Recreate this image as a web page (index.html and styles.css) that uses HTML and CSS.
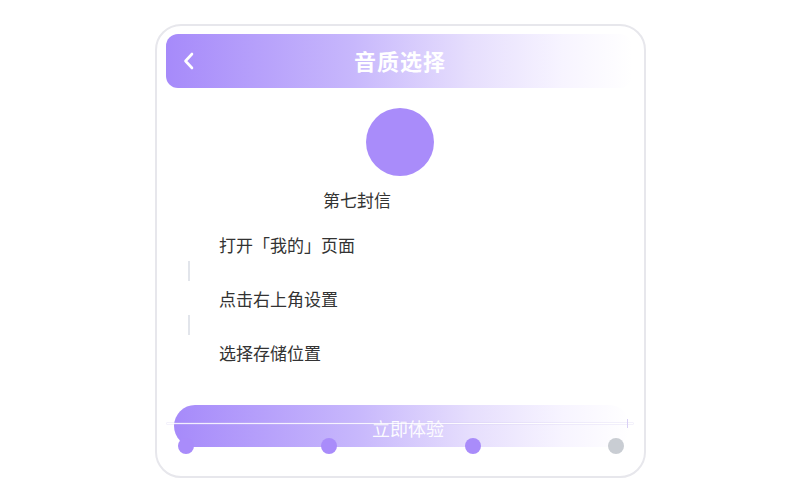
FILE: index.html
```
<!DOCTYPE html>
<html lang="zh">
<head>
<meta charset="utf-8">
<link rel="stylesheet" href="styles.css">
</head>
<body>
<div class="card">
  <div class="header">
    <svg class="back" width="14" height="18" viewBox="0 0 14 18"><path d="M10 2 L3.5 9 L10 16" fill="none" stroke="#fff" stroke-width="2.6" stroke-linecap="round" stroke-linejoin="round"/></svg>
    <div class="title">音质选择</div>
  </div>
  <div class="avatar"></div>
  <div class="name">第七封信</div>
  <div class="steps">
    <div class="step">打开「我的」页面</div>
    <div class="sep"></div>
    <div class="step">点击右上角设置</div>
    <div class="sep"></div>
    <div class="step">选择存储位置</div>
  </div>
  <div class="bottom">
    <div class="btn">立即体验</div>
    <div class="hline"><span class="tick"></span></div>
    <div class="dots">
      <span class="dot on"></span>
      <span class="dot on"></span>
      <span class="dot on"></span>
      <span class="dot off"></span>
    </div>
  </div>
</div>
</body>
</html>
```
FILE: styles.css
```
html, body {
  margin: 0;
  padding: 0;
  background: #fff;
}
body {
  font-family: "Noto Sans CJK SC", "Noto Sans", sans-serif;
  color: #333;
}
.card {
  box-sizing: border-box;
  width: 491px;
  height: 454px;
  margin: 24px 0 0 155px;
  border: 2px solid #e7e7ec;
  border-radius: 26px;
  padding: 8px 12px 0 9px;
  display: flex;
  flex-direction: column;
}
.header {
  position: relative;
  height: 54px;
  border-radius: 12px;
  background: linear-gradient(90deg, #a68afa 0%, #c7b7fc 40%, #e6defd 65%, #f7f4ff 85%, #ffffff 100%);
  display: flex;
  align-items: center;
  justify-content: center;
}
.back {
  position: absolute;
  left: 16px;
  top: 18px;
}
.title {
  color: #fff;
  font-size: 22px;
  font-weight: 700;
  letter-spacing: 1px;
  margin-left: 2px;
  line-height: 30px;
  margin-bottom: 3px;
}
.avatar {
  width: 68px;
  height: 68px;
  border-radius: 50%;
  background: #a98cfa;
  margin: 20px auto 0 200px;
}
.name {
  font-size: 17px;
  margin: 12px 0 0 157px;
  line-height: 24px;
}
.steps {
  margin: 21px 0 0 20px;
  display: flex;
  flex-direction: column;
}
.step {
  font-size: 17px;
  line-height: 24px;
  padding-left: 33px;
}
.sep {
  width: 2px;
  height: 20px;
  background: #e2e5eb;
  margin: 4px 0 6px 2px;
}
.bottom {
  position: relative;
  margin-top: 40px;
}
.btn {
  margin-left: 8px;
  width: 456px;
  height: 42px;
  border-radius: 21px;
  background: linear-gradient(90deg, #a68afa 0%, #c7b7fc 40%, #e6defd 65%, #f7f4ff 85%, #ffffff 100%);
  color: rgba(255,255,255,0.95);
  font-size: 18px;
  line-height: 46px;
  text-align: center;
  box-sizing: border-box;
  padding-left: 12px;
}
.hline {
  position: absolute;
  left: 1px;
  width: 466px;
  top: 18px;
  height: 1px;
  background: rgba(255,255,255,0.85);
  box-shadow: 0 0 0 0.5px rgba(210,200,240,0.5);
}
.tick {
  position: absolute;
  left: 460px;
  top: -4px;
  width: 1px;
  height: 9px;
  background: #d9d0f5;
}
.dots {
  display: flex;
  justify-content: space-between;
  width: 446px;
  margin: -9px 0 0 12px;
  position: relative;
}
.dot {
  width: 16px;
  height: 16px;
  border-radius: 50%;
}
.dot.on { background: #a98cfa; }
.dot.off { background: #c9cdd3; }
```
